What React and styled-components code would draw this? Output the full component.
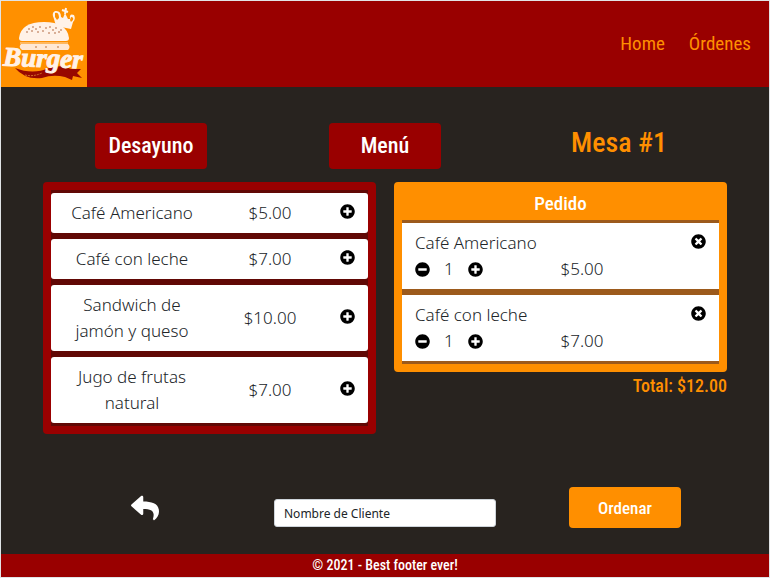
import React, { useState } from 'react';
import styled, { createGlobalStyle } from 'styled-components';
import { FaPlusCircle, FaMinusCircle, FaTimesCircle, FaReply } from 'react-icons/fa';

const color = {
  red: '#990000',
  maroon: '#610805',
  orange: '#ff8f00',
  brown: '#9c5a1c',
  dark: '#28231f',
  ink: '#212529',
};
const display = "'Roboto Condensed', 'Roboto', sans-serif";
const text = "'Noto Sans', 'Open Sans', sans-serif";

const GlobalStyle = createGlobalStyle`
  *, *::before, *::after { box-sizing: border-box; }
  body { margin: 0; background: ${color.dark}; font-family: ${text}; color: ${color.ink}; }
  button { font: inherit; color: inherit; border: 0; cursor: pointer; }
`;

const Page = styled.div`
  min-height: 100vh;
  display: flex;
  flex-direction: column;
  border: 1px solid #e1e4e6;
  background: ${color.dark};
`;

const Header = styled.header`
  display: flex;
  align-items: center;
  justify-content: space-between;
  background: ${color.red};
`;

const LogoLink = styled.a`
  display: block;
  svg { display: block; width: 86px; height: 86px; }
`;

const Nav = styled.nav`
  display: flex;
  gap: 24px;
  padding-right: 18px;
`;

const NavLink = styled.a`
  font: 19px/24px ${display};
  color: ${color.orange};
  text-decoration: none;
`;

const Main = styled.main`
  flex: 1;
  display: flex;
  flex-direction: column;
`;

const TopBar = styled.div`
  display: grid;
  grid-template-columns: repeat(3, 1fr);
  justify-items: center;
  padding: 36px 33px 13px;
`;

const MenuButton = styled.button`
  width: 112px;
  height: 46px;
  padding: 0;
  border-radius: 4px;
  background: ${color.red};
  color: #fff;
  font: 500 22px/28px ${display};
`;

const TableTitle = styled.h1`
  margin: 0;
  font: 500 28px/40px ${display};
  color: ${color.orange};
`;

const Columns = styled.div`
  display: grid;
  grid-template-columns: 1fr 1fr;
  align-items: start;
  gap: 18px;
  padding: 0 42px;
`;

const Panel = styled.section`
  padding: 8px;
  border-radius: 4px;
  background: ${({ $tone }) => color[$tone]};
`;

const List = styled.ul`
  display: grid;
  gap: 6px;
  margin: 0;
  padding: 3px 0;
  list-style: none;
  font-size: 17px;
  font-weight: 300;
  line-height: 26px;
  background: ${({ $tone }) => color[$tone]};
`;

const Product = styled.li`
  display: grid;
  grid-template-columns: 162fr 114fr 41fr;
  align-items: center;
  padding: 7px 0;
  border-radius: 3px;
  background: #fff;
  text-align: center;
`;

const ProductName = styled.span`
  padding: 0 20px;
`;

const IconButton = styled.button`
  display: inline-flex;
  justify-content: center;
  align-items: center;
  justify-self: center;
  padding: 0;
  background: none;
  color: ${({ $light }) => ($light ? '#fff' : '#000')};
  font-size: ${({ $light }) => ($light ? 28 : 15)}px;
`;

const RowButton = styled(IconButton)`
  padding-bottom: 4px;
`;

const OrderTitle = styled.h2`
  margin: 0;
  padding-bottom: 2px;
  font: 500 19px/28px ${display};
  color: #fff;
  text-align: center;
`;

const OrderItem = styled.li`
  display: grid;
  grid-template-columns: 1fr 1fr;
  padding: 7px 13px;
  background: #fff;
`;

const ItemHead = styled.div`
  grid-column: 1 / -1;
  display: flex;
  justify-content: space-between;
`;

const Quantity = styled.div`
  display: flex;
  align-items: center;
  gap: 14px;
`;

const Total = styled.p`
  margin: 0;
  font: 500 18px/28px ${display};
  color: ${color.orange};
  text-align: right;
`;

const Actions = styled.form`
  display: grid;
  grid-template-columns: repeat(3, 1fr);
  justify-items: center;
  align-items: center;
  margin-top: auto;
  padding: 0 24px 26px;
`;

const ClientInput = styled.input`
  width: 222px;
  height: 28px;
  margin-top: 11px;
  padding: 0 9px;
  border: 1px solid #ced4da;
  border-radius: 3px;
  background: #fff;
  color: ${color.ink};
  font: 12px/18px ${text};
  &::placeholder { color: ${color.ink}; opacity: 1; }
`;

const OrderButton = styled.button`
  width: 112px;
  height: 41px;
  padding: 0;
  border-radius: 4px;
  background: ${color.orange};
  color: #fff;
  font: 500 17px/24px ${display};
`;

const Footer = styled.footer`
  background: ${color.red};
  color: #fff;
  font: 500 14px/23px ${display};
  text-align: center;
`;

const BurgerLogo = () => (
  <svg viewBox="0 0 86 86" role="img" aria-label="Burger">
    <rect width="86" height="86" fill="#ff9000" />
    <path d="M55 25 53 18Q50 12 54 10Q60 9 60 16L62 17 64 12 67 18 69 18Q68 12 73 14Q75 18 72 21L70 28Z" fill="#fff2e8" />
    <path d="M54 12q4-1 4 5l-2 2-2-3ZM70 16q3 0 2 3l-2 2-1-2Z" fill="#ff9000" />
    <path d="M65 7 64 13M61 9 67 11" stroke="#fff2e8" strokeWidth="2" />
    <path d="M18 37Q20 21 43 21Q66 21 68 37Q68 40 65 40H21Q18 40 18 37Z" fill="#fff2e8" />
    <g fill="#a85a31">
      {[[26, 31], [28, 28], [31, 30], [32, 26], [35, 28], [37, 31], [39, 26], [42, 30], [45, 27], [48, 32], [49, 26], [52, 29], [54, 32], [55, 27], [58, 31], [60, 29]].map(([x, y]) => (
        <circle key={`${x}-${y}`} cx={x} cy={y} r="0.8" />
      ))}
    </g>
    <path d="M19 42H67" stroke="#ffe0bd" strokeWidth="1" />
    <path d="M20 43H67Q70 46 67 49H21Q17 46 20 43Z" fill="#ffe8d4" />
    <path d="M34 46h2M44 46h2M56 46h2" stroke="#bd7038" />
    <path d="M14 67Q32 74 48 67Q61 63 70 68L80 68 76 72 81 77 72 75 71 79 64 76Q52 73 41 77Q24 79 14 67Z" fill="#980800" />
    <path d="M24 74q8 2 17-2" fill="none" stroke="#d2742a" strokeDasharray="2 1" />
    <text
      x="42"
      y="66"
      textAnchor="middle"
      transform="rotate(2 43 60)"
      fontFamily="'Liberation Serif', serif"
      fontStyle="italic"
      fontWeight="bold"
      fontSize="27"
      fill="#fff2e8"
      stroke="#fff2e8"
      strokeWidth="1"
    >
      Burger
    </text>
  </svg>
);

const products = [
  { name: 'Café Americano', price: 5 },
  { name: 'Café con leche', price: 7 },
  { name: 'Sandwich de jamón y queso', price: 10 },
  { name: 'Jugo de frutas natural', price: 7 },
];

const money = (n) => `$${n.toFixed(2)}`;

export default function App() {
  const [order, setOrder] = useState([
    { ...products[0], count: 1 },
    { ...products[1], count: 1 },
  ]);

  const change = (product, step) =>
    setOrder((items) => {
      const known = items.some((item) => item.name === product.name);
      if (!known) return [...items, { ...product, count: 1 }];
      return items.map((item) =>
        item.name === product.name ? { ...item, count: Math.max(1, item.count + step) } : item
      );
    });
  const remove = (name) => setOrder((items) => items.filter((item) => item.name !== name));
  const total = order.reduce((sum, item) => sum + item.price * item.count, 0);

  return (
    <Page>
      <GlobalStyle />
      <Header>
        <LogoLink href="#home"><BurgerLogo /></LogoLink>
        <Nav>
          <NavLink href="#home">Home</NavLink>
          <NavLink href="#ordenes">Órdenes</NavLink>
        </Nav>
      </Header>
      <Main>
        <TopBar>
          <MenuButton type="button">Desayuno</MenuButton>
          <MenuButton type="button">Menú</MenuButton>
          <TableTitle>Mesa #1</TableTitle>
        </TopBar>
        <Columns>
          <Panel $tone="red">
            <List $tone="maroon">
              {products.map((product) => (
                <Product key={product.name}>
                  <ProductName>{product.name}</ProductName>
                  <span>{money(product.price)}</span>
                  <RowButton type="button" aria-label={`Agregar ${product.name}`} onClick={() => change(product, 1)}>
                    <FaPlusCircle />
                  </RowButton>
                </Product>
              ))}
            </List>
          </Panel>
          <div>
            <Panel $tone="orange">
              <OrderTitle>Pedido</OrderTitle>
              <List $tone="brown">
                {order.map((item) => (
                  <OrderItem key={item.name}>
                    <ItemHead>
                      <span>{item.name}</span>
                      <RowButton type="button" aria-label={`Quitar ${item.name}`} onClick={() => remove(item.name)}>
                        <FaTimesCircle />
                      </RowButton>
                    </ItemHead>
                    <Quantity>
                      <IconButton type="button" aria-label="Menos" onClick={() => change(item, -1)}>
                        <FaMinusCircle />
                      </IconButton>
                      <span>{item.count}</span>
                      <IconButton type="button" aria-label="Más" onClick={() => change(item, 1)}>
                        <FaPlusCircle />
                      </IconButton>
                    </Quantity>
                    <span>{money(item.price)}</span>
                  </OrderItem>
                ))}
              </List>
            </Panel>
            <Total>Total: {money(total)}</Total>
          </div>
        </Columns>
        <Actions onSubmit={(event) => event.preventDefault()}>
          <IconButton type="button" $light aria-label="Volver"><FaReply /></IconButton>
          <ClientInput type="text" aria-label="Nombre de Cliente" placeholder="Nombre de Cliente" />
          <OrderButton type="submit">Ordenar</OrderButton>
        </Actions>
      </Main>
      <Footer>© 2021 - Best footer ever!</Footer>
    </Page>
  );
}
